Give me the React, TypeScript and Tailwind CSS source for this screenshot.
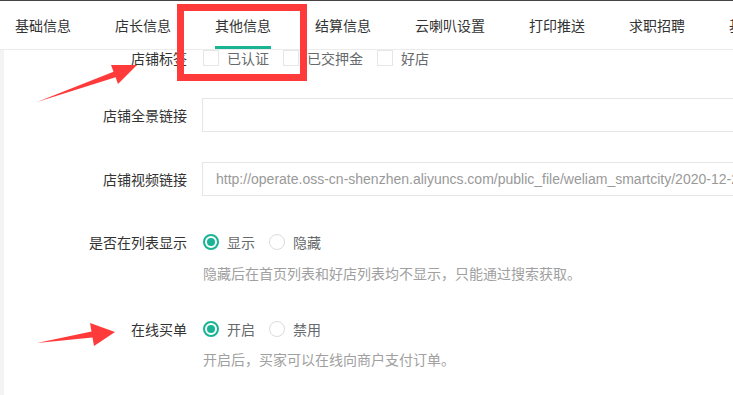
import React from "react";

const TABS = ["基础信息", "店长信息", "其他信息", "结算信息", "云喇叭设置", "打印推送", "求职招聘", "基本设置"];

const FONT = { fontFamily: '"Microsoft YaHei", "Noto Sans CJK SC", "Liberation Sans", sans-serif' };

function Checkbox({ label }: { label: string }) {
  return (
    <label className="flex items-center gap-[8px] mr-[14px]">
      <span className="w-[16px] h-[16px] border border-[#e5e6e7] bg-white" />
      <span className="text-[14px] leading-[16px] text-[#676a6c]">{label}</span>
    </label>
  );
}

function Radio({ label, checked }: { label: string; checked?: boolean }) {
  return (
    <label className="flex items-center gap-[8px] mr-[14px]">
      {checked ? (
        <span className="w-[16px] h-[16px] rounded-full border-[2px] border-[#1ab394] flex items-center justify-center">
          <span className="w-[8px] h-[8px] rounded-full bg-[#1ab394]" />
        </span>
      ) : (
        <span className="w-[16px] h-[16px] rounded-full border border-[#dcdcdc] bg-white" />
      )}
      <span className="text-[14px] leading-[16px] text-[#676a6c]">{label}</span>
    </label>
  );
}

function Label({ text }: { text: string }) {
  return <div className="w-[187px] shrink-0 text-right text-[14px] text-[#333]">{text}</div>;
}

export default function App() {
  return (
    <div className="relative w-[733px] h-[395px] overflow-hidden bg-white" style={FONT}>
      {/* top tabs */}
      <div className="h-[50px] border-t border-[#444] border-b border-b-[#ececec] flex pl-[15px] bg-white">
        {TABS.map((t, i) => (
          <div
            key={t}
            className={
              "relative shrink-0 flex items-center text-[14px] text-[#333] whitespace-nowrap " +
              (i === 0 ? "mr-[44px]" : "mr-[44px]")
            }
          >
            {t}
            {t === "其他信息" && <span className="absolute left-0 right-0 bottom-0 h-[3px] bg-[#1ab394]" />}
          </div>
        ))}
      </div>

      {/* content */}
      <div className="flex">
        <div className="w-[4px] shrink-0 bg-[#f3f3f4] h-[345px]" />
        <div className="flex-1 -ml-[4px]">
          <div className="flex items-center h-[16px] gap-[15px]">
            <Label text="店铺标签" />
            <div className="flex items-center pl-px">
              <Checkbox label="已认证" />
              <Checkbox label="已交押金" />
              <Checkbox label="好店" />
            </div>
          </div>

          <div className="flex items-center gap-[15px] mt-[32px]">
            <Label text="店铺全景链接" />
            <div className="w-[600px] shrink-0 h-[34px] border border-[#e5e6e7] bg-white" />
          </div>

          <div className="flex items-center gap-[15px] mt-[30px]">
            <Label text="店铺视频链接" />
            <div
              className="w-[600px] shrink-0 h-[34px] border border-[#e5e6e7] bg-white px-[13px] flex items-center text-[14px] text-[#999] whitespace-nowrap overflow-hidden"
              style={{ fontFamily: '"Liberation Sans", Arial, sans-serif' }}
            >
              http://operate.oss-cn-shenzhen.aliyuncs.com/public_file/weliam_smartcity/2020-12-28/abc.mp4
            </div>
          </div>

          <div className="flex items-center h-[16px] gap-[15px] mt-[38px]">
            <Label text="是否在列表显示" />
            <div className="flex items-center pl-px">
              <Radio label="显示" checked />
              <Radio label="隐藏" />
            </div>
          </div>
          <div className="pl-[203px] mt-[13px] text-[14px] leading-[20px] text-[#a0a0a0]">
            隐藏后在首页列表和好店列表均不显示，只能通过搜索获取。
          </div>

          <div className="flex items-center h-[16px] gap-[15px] mt-[38px]">
            <Label text="在线买单" />
            <div className="flex items-center pl-px">
              <Radio label="开启" checked />
              <Radio label="禁用" />
            </div>
          </div>
          <div className="pl-[203px] mt-[12px] text-[14px] leading-[20px] text-[#a0a0a0]">
            开启后，买家可以在线向商户支付订单。
          </div>
        </div>
      </div>

      {/* annotation: red box */}
      <div className="absolute left-[177px] top-[4px] w-[130px] h-[77px] border-[7px] border-[#ff3a3a]" />

      {/* annotation: arrows */}
      <svg className="absolute inset-0 pointer-events-none" width="733" height="395">
        <polygon
          points="37,102 113.5,71.7 111,65 137,65 118,84 115.6,77.3"
          fill="#ff3a3a"
        />
        <polygon
          points="37,343 91.5,331.5 90,323 115,332 94,346 92.5,337.5"
          fill="#ff3a3a"
        />
      </svg>
    </div>
  );
}
